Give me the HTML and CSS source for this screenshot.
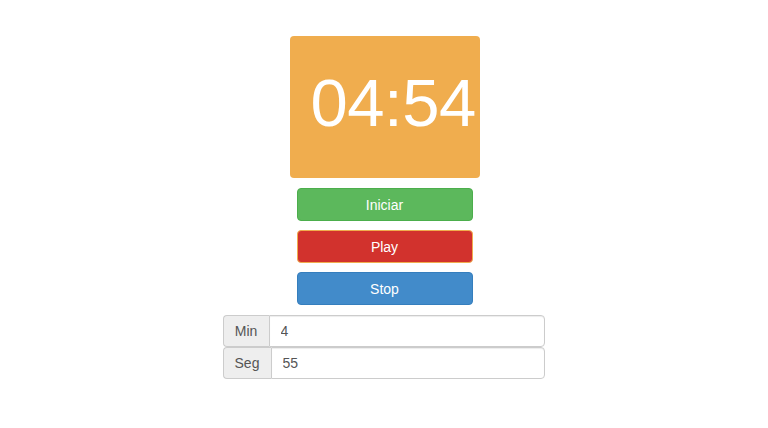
FILE: index.html
```html
<!DOCTYPE html>
<html lang="es">
<head>
<meta charset="utf-8">
<title>Timer</title>
<link rel="stylesheet" href="styles.css">
</head>
<body>
<main class="app">
  <div class="clock">04:54</div>
  <div class="actions">
    <button class="btn btn-start">Iniciar</button>
    <button class="btn btn-play">Play</button>
    <button class="btn btn-stop">Stop</button>
  </div>
  <div class="fields">
    <div class="group">
      <span class="addon addon-min">Min</span>
      <input class="field" type="text" value="4">
    </div>
    <div class="group">
      <span class="addon addon-seg">Seg</span>
      <input class="field" type="text" value="55">
    </div>
  </div>
</main>
</body>
</html>
```
FILE: styles.css
```css
* { box-sizing: border-box; }
html, body { margin: 0; padding: 0; background: #fff; }
body {
  font-family: "Liberation Sans", Arial, sans-serif;
  font-size: 14px;
  color: #333;
}
.app {
  display: flex;
  flex-direction: column;
  align-items: center;
  padding-top: 36px;
}
.clock {
  width: 190px;
  height: 142px;
  margin-left: 1px;
  background: #f0ad4e;
  border-radius: 4px;
  color: #fff;
  font-size: 67px;
  letter-spacing: -0.5px;
  line-height: 1;
  padding: 33px 0 0 21px;
  white-space: nowrap;
}
.actions {
  display: flex;
  flex-direction: column;
  gap: 9px;
  margin-top: 10px;
  margin-left: 1px;
}
.btn {
  width: 176px;
  height: 33px;
  border: 1px solid transparent;
  border-radius: 4px;
  color: #fff;
  font-family: "Liberation Sans", Arial, sans-serif;
  font-size: 14px;
  padding: 0;
  cursor: pointer;
}
.btn-start { background: #5cb85c; border-color: #4cae4c; }
.btn-play { background: #d2322d; border-color: #f0ad4e; }
.btn-stop { background: #428bca; border-color: #357ebd; }
.fields {
  display: flex;
  flex-direction: column;
  margin-top: 10px;
  margin-left: -1px;
}
.group {
  display: flex;
  width: 322px;
  height: 32px;
}
.addon {
  display: flex;
  align-items: center;
  justify-content: center;
  background: #eee;
  border: 1px solid #ccc;
  border-right: 0;
  border-radius: 4px 0 0 4px;
  color: #555;
  font-size: 14px;
}
.addon-min { width: 46px; }
.addon-seg { width: 48px; }
.field {
  flex: 1;
  min-width: 0;
  border: 1px solid #ccc;
  border-radius: 0 4px 4px 0;
  padding: 0 11px;
  font-family: "Liberation Sans", Arial, sans-serif;
  font-size: 14px;
  color: #555;
  box-shadow: inset 0 1px 1px rgba(0,0,0,.075);
}
```
